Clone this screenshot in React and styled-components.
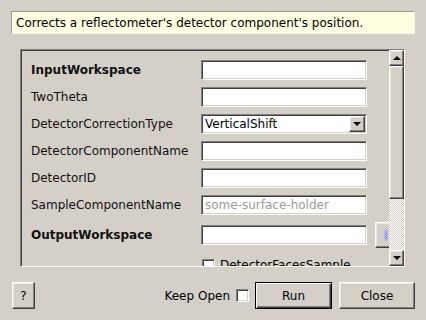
import React from "react";
import styled, { createGlobalStyle } from "styled-components";

const GlobalStyle = createGlobalStyle`
  html, body {
    margin: 0;
    padding: 0;
    background: #d4d0c8;
  }
  body {
    font-family: "DejaVu Sans", Verdana, sans-serif;
    font-size: 12px;
    color: #000;
  }
`;

const raised = `
  border: 1px solid;
  border-color: #fff #404040 #404040 #fff;
  box-shadow: inset -1px -1px #808080, inset 1px 1px #e8e6e1;
`;

const sunken = `
  border: 1px solid;
  border-color: #808080 #fff #fff #808080;
  box-shadow: inset 1px 1px #404040, inset -1px -1px #d4d0c8;
`;

const Window = styled.div`
  width: 426px;
  height: 320px;
  box-sizing: border-box;
  padding: 11px 11px 0 11px;
  display: flex;
  flex-direction: column;
`;

const Description = styled.div`
  height: 23px;
  box-sizing: border-box;
  background: #ffffe1;
  border: 1px solid;
  border-color: #9a9890 #f4f4ee #f4f4ee #9a9890;
  padding: 0 4px;
  display: flex;
  align-items: center;
  white-space: nowrap;
`;

const Panel = styled.div`
  margin: 15px 10px 0 9px;
  height: 218px;
  box-sizing: border-box;
  ${sunken}
  display: flex;
  overflow: hidden;
`;

const Form = styled.div`
  flex: 1;
  overflow: hidden;
  padding: 10px 0 0 10px;
  display: flex;
  flex-direction: column;
  gap: 7px;
`;

const Row = styled.div`
  display: grid;
  grid-template-columns: 162px 166px 26px;
  column-gap: 8px;
  align-items: center;
  min-height: 20px;
  flex-shrink: 0;
`;

const Label = styled.span`
  font-weight: ${(p) => (p.$bold ? "bold" : "normal")};
  color: #111;
  white-space: nowrap;
`;

const Field = styled.div`
  height: 20px;
  box-sizing: border-box;
  background: #fff;
  ${sunken}
  display: flex;
  align-items: center;
  padding-left: 3px;
  color: ${(p) => (p.$placeholder ? "#9a9a9a" : "#000")};
  white-space: nowrap;
  overflow: hidden;
`;

const ComboText = styled.span`
  flex: 1;
`;

const ComboButton = styled.div`
  width: 16px;
  height: 16px;
  box-sizing: border-box;
  margin-right: 1px;
  background: #d4d0c8;
  ${raised}
  display: flex;
  align-items: center;
  justify-content: center;
`;

const Arrow = styled.div`
  width: 0;
  height: 0;
  border-left: 4px solid transparent;
  border-right: 4px solid transparent;
  ${(p) => (p.$up ? "border-bottom: 4px solid #000;" : "border-top: 4px solid #000;")}
`;

const BrowseButton = styled.div`
  height: 26px;
  box-sizing: border-box;
  ${raised}
  display: flex;
  align-items: center;
  justify-content: center;
`;

const CheckRow = styled.div`
  display: flex;
  align-items: center;
  gap: 5px;
  padding-left: 171px;
  min-height: 20px;
  flex-shrink: 0;
  white-space: nowrap;
`;

const Check = styled.div`
  width: 13px;
  height: 13px;
  box-sizing: border-box;
  background: #fff;
  ${sunken}
  flex-shrink: 0;
`;

const ScrollBar = styled.div`
  width: 15px;
  display: flex;
  flex-direction: column;
  flex-shrink: 0;
`;

const ScrollButton = styled.div`
  height: 16px;
  box-sizing: border-box;
  background: #d4d0c8;
  ${raised}
  display: flex;
  align-items: center;
  justify-content: center;
`;

const Thumb = styled.div`
  height: 133px;
  box-sizing: border-box;
  background: #d4d0c8;
  ${raised}
`;

const Track = styled.div`
  flex: 1;
  background: repeating-conic-gradient(#fff 0 25%, #d4d0c8 0 50%) 0 0 / 2px 2px;
`;

const Footer = styled.div`
  margin-top: 15px;
  padding: 0 0 0 1px;
  display: flex;
  align-items: center;
`;

const Button = styled.button`
  font-family: inherit;
  font-size: 12px;
  color: #000;
  height: 27px;
  width: ${(p) => p.$width}px;
  box-sizing: border-box;
  background: #d4d0c8;
  padding: 0;
  ${raised}
  ${(p) =>
    p.$default &&
    `
    border-color: #000;
    box-shadow: inset 1px 1px #fff, inset -1px -1px #404040, inset -2px -2px #808080;
  `}
`;

const Spacer = styled.div`
  flex: 1;
`;

const KeepOpen = styled.label`
  display: flex;
  align-items: center;
  gap: 6px;
  margin-right: 6px;
`;

const textRows = [
  { label: "InputWorkspace", bold: true },
  { label: "TwoTheta" },
  { label: "DetectorCorrectionType", combo: "VerticalShift" },
  { label: "DetectorComponentName" },
  { label: "DetectorID" },
  { label: "SampleComponentName", placeholder: "some-surface-holder" },
  { label: "OutputWorkspace", bold: true, browse: true },
];

export default function App() {
  return (
    <>
      <GlobalStyle />
      <Window>
        <Description>
          Corrects a reflectometer's detector component's position.
        </Description>
        <Panel>
          <Form>
            {textRows.map((r) => (
              <Row key={r.label}>
                <Label $bold={r.bold}>{r.label}</Label>
                {r.combo ? (
                  <Field>
                    <ComboText>{r.combo}</ComboText>
                    <ComboButton>
                      <Arrow />
                    </ComboButton>
                  </Field>
                ) : (
                  <Field $placeholder={!!r.placeholder}>{r.placeholder}</Field>
                )}
                {r.browse && (
                  <BrowseButton>
                    <svg width="24" height="14" viewBox="0 0 24 14">
                      <rect x="8" y="1" width="4" height="12" rx="1.5" fill="#b8b8f4" />
                      <rect x="9" y="3" width="2" height="8" fill="#9c9ce8" />
                    </svg>
                  </BrowseButton>
                )}
              </Row>
            ))}
            <CheckRow>
              <Check />
              <span>DetectorFacesSample</span>
            </CheckRow>
          </Form>
          <ScrollBar>
            <ScrollButton>
              <Arrow $up />
            </ScrollButton>
            <Thumb />
            <Track />
            <ScrollButton>
              <Arrow />
            </ScrollButton>
          </ScrollBar>
        </Panel>
        <Footer>
          <Button $width={23}>?</Button>
          <Spacer />
          <KeepOpen>
            Keep Open
            <Check />
          </KeepOpen>
          <Button $width={77} $default style={{ marginRight: 7 }}>
            Run
          </Button>
          <Button $width={76}>Close</Button>
        </Footer>
      </Window>
    </>
  );
}
